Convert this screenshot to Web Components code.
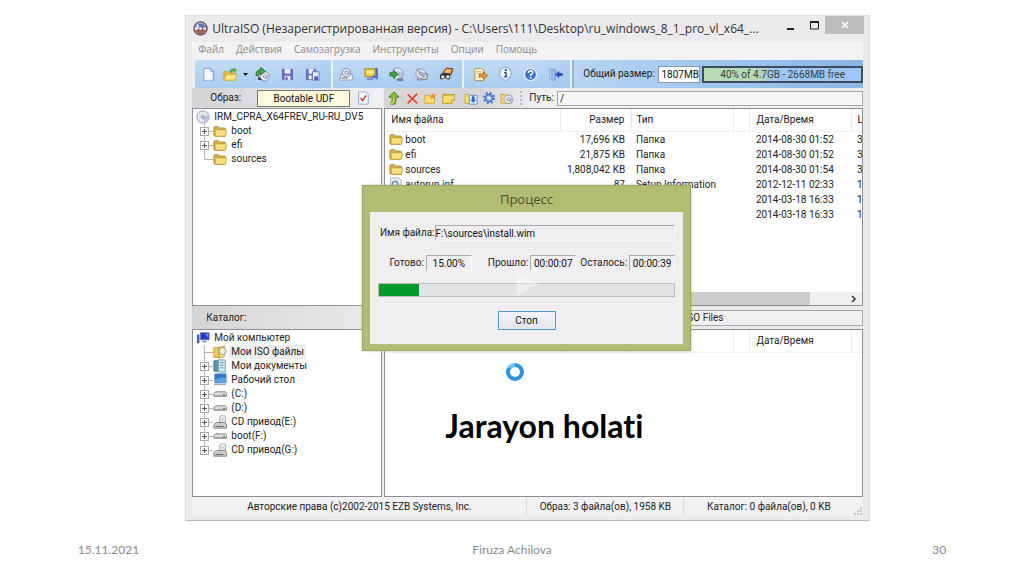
<!DOCTYPE html>
<html lang="uz">
<head>
<meta charset="utf-8">
<title>Jarayon holati</title>
<style>
body{margin:0;background:#fff;font-family:Roboto,"Liberation Sans",sans-serif;font-size:10px;line-height:14px;color:#222}
</style>
</head>
<body>
<slide-page>
  <iso-window></iso-window>
  <slide-footer slot="footer"><span>15.11.2021</span><span>Firuza Achilova</span><span>30</span></slide-footer>
</slide-page>
<script>
const svg = (w, h, body) => `<svg width="${w}" height="${h}" viewBox="0 0 16 16" aria-hidden="true">${body}</svg>`;
const cd = (x, y, r) => `<circle cx="${x}" cy="${y}" r="${r}" fill="#e4e6f2" stroke="#8a8fa8"/><path d="M${x} ${y}L${x + r - 1} ${y - 2}A${r} ${r} 0 0 1 ${x + 2} ${y + r - 1}Z" fill="#b9bfe0"/><circle cx="${x}" cy="${y}" r="1.6" fill="#fff" stroke="#777d96"/>`;
const folder = '<path d="M1 4.5Q1 3 2.5 3H6l1.500 1.600H13q1.300 0 1.300 1.300V13q0 1-1 1H2.500Q1 14 1 12.500Z" fill="#d9b343" stroke="#a88a35"/><path d="M3 6.500h11.500q1 0 .8 1L14.400 13q-.2 1-1.200 1H3.400q-1 0-1-1V7.500Z" fill="#f7e07e" stroke="#c09c3c"/>';
const gold = '<path d="M1 4h5l1.500 2H13v8H1z" fill="#f8dc74" stroke="#cfa63c"/>';
const drive = '<path d="M1 7.500L3 5.500H14L15.500 7.500V10.500H1Z" fill="#dcdcdc" stroke="#7c7c7c"/><path d="M1.500 9.500H15V11H1.500Z" fill="#9b9b9b"/><rect x="11.500" y="8" width="2" height="1.500" fill="#5d7a5d"/>';
const ICONS = {
  disc: cd(8, 8, 7),
  logo: '<circle cx="8" cy="8" r="7" fill="#d8d4ea" stroke="#5b4a63" stroke-width="1.400"/><path d="M2 6Q8-1 14 6L8 8Z" fill="#5a76c4"/><path d="M2 10L8 8L14 10Q11 14.500 8 14.500T2 10Z" fill="#a45f4c"/><path d="M5 3L8 8L3 9Z" fill="#efefff"/><circle cx="8" cy="8" r="2" fill="#fff" stroke="#62546e"/>',
  fresh: '<path d="M3 1.500H10.500L13.500 4.500V14.500H3Z" fill="#fbfcff" stroke="#7492cd"/><path d="M10.500 1.500V4.500H13.500" fill="#c7d8f8" stroke="#7492cd"/><path d="M12.500 6v8H5" fill="none" stroke="#b8cbf2"/>',
  open: '<path d="M1 5h5l1 1.500h6V14H1z" fill="#e7bf3f" stroke="#c9a23c"/><path d="M3.500 8H15L12.500 14H1.200Z" fill="#fbe782" stroke="#d5b146"/><path d="M7 5Q8 .5 12 2V.5L15 3.500L12 6V4.500Q10 4 9.500 6Z" fill="#54a845"/>',
  cdup: cd(10.500, 10, 5) + '<path d="M1 9Q1 3 6 3V.5L11 4.500L6 8.500V6Q3.500 6 3.500 9.500Z" fill="#47a647" stroke="#22702e"/><path d="M4 10l4 4-5-.5z" fill="#333"/>',
  save: '<path d="M2 2H14V14H2Z" fill="#6a6fc4"/><path d="M5 2H11V7H5Z" fill="#eef0ff"/><path d="M5 9.500H11V14H5Z" fill="#e2e5fa"/><path d="M6 10.500H8V14H6Z" fill="#5358a8"/>',
  saveas: '<path d="M1 2H12V14H1Z" fill="#6a6fc4"/><path d="M4 2H9V7H4Z" fill="#eef0ff"/><path d="M8 5H15V14H8Z" fill="#e1e6fb" stroke="#7075bd"/><path d="M10 10H14V14H10Z" fill="#5358b8"/><path d="M4 9H7V13H4Z" fill="#fff"/>',
  burn: '<path d="M2 8H14L15 14H1Z" fill="#e9e9ef" stroke="#9d9dad"/>' + cd(8, 6, 4.5) + '<rect x="3" y="11" width="6" height="1.500" fill="#8c92a6"/>',
  zip: '<rect x="1" y="2" width="11" height="8" fill="#f4ce3c" stroke="#a87e1b"/><rect x="3" y="4" width="7" height="3" fill="#fff0a0"/><path d="M13.500 1V13" stroke="#4a70bf" stroke-width="2.500" fill="none"/><path d="M3 11H10V14H3Z" fill="#7d93c4"/><path d="M8 11L11 8L13 12Z" fill="#4a70bf"/>',
  mount: cd(9, 7, 6) + '<path d="M1 6H5V3.500L9.500 8L5 12V9.500H1Z" fill="#45a846" stroke="#1d7330"/><path d="M9 12h6v3H9z" fill="#777f9b"/>',
  compress: '<path d="M4 14L14 13V7H5Z" fill="#d5d9e5" stroke="#6e7487"/>' + cd(7, 7, 5) + '<path d="M7 7L3 2M7 7L11 11" stroke="#6e7487"/>',
  write: '<path d="M4 6L8 1L15 2L13 8Z" fill="#d98443" stroke="#743a18"/><path d="M8 2.500L13 3L11 6L6 6Z" fill="#f6c57c"/><path d="M1 8Q6 5 12 8V12Q10 15 6.500 11.500Q3 15 1 12Z" fill="#3b3940"/><circle cx="4" cy="10.500" r="1.700" fill="#fff"/><circle cx="9.500" cy="10.500" r="1.700" fill="#e9e5e2"/>',
  extract: '<path d="M2 1.500H9L12 4.500V14.500H2Z" fill="#fff1c5" stroke="#b79548"/><path d="M4 5H9M4 7H8M4 11H8" stroke="#cdb270"/><path d="M7 7.500H11V5L15.500 9L11 13V10.500H7Z" fill="#eb9d3a" stroke="#ad651b"/>',
  info: '<path d="M8 .5A6.300 6.300 0 0 1 10 12.700L8 15.500L6 12.700A6.300 6.300 0 0 1 8 .5Z" fill="#eef5ff" stroke="#7aa0d2"/><path d="M6.500 6H8.500V10.500M6.500 10.500H10" fill="none" stroke="#234a8f" stroke-width="1.500"/><circle cx="8.300" cy="3.400" r="1.200" fill="#234a8f"/>',
  help: '<circle cx="8" cy="8" r="6.500" fill="#3a70cf" stroke="#e8f1ff" stroke-width="1.500"/><path d="M5.800 6.500Q6 4 8.200 4Q10.500 4.200 10.300 6.200Q10 7.400 8.200 8.200V9.500" fill="none" stroke="#fff" stroke-width="1.600"/><circle cx="8.200" cy="11.500" r="1" fill="#fff"/>',
  exit: '<path d="M2 2.500H8V13.500H2Z" fill="#dcebff" stroke="#7fa2da"/><path d="M4 2.500L7 4V15L4 13.500Z" fill="#9fc0ef" stroke="#7fa2da"/><path d="M15.500 6.500H12V4L7.500 8L12 12V9.500H15.500Z" fill="#2454c0"/>',
  check: '<path d="M3 1H11L14 4V15H3Z" fill="#f4f7ff" stroke="#86a3d6"/><path d="M5.500 8L7.500 11L11.500 5" fill="none" stroke="#cf3c30" stroke-width="1.800"/>',
  up: '<path d="M4 15H9Q11 11 10 7H13.500L8 1L2 7H5.500Q7 11 4 15Z" fill="#7fc13d" stroke="#3e7a1e"/><path d="M4 15Q9 13 7.500 7" fill="none" stroke="#e8d254" stroke-width="1.500"/>',
  del: '<path d="M2 3L14 14M14 2L2 14" stroke="#e04b30" stroke-width="2.200"/>',
  newfolder: gold + '<path d="M11 1L12 3.500L15 4L13 6L13.500 9L11 7.500L8.500 9L9 6L7 4L10 3.500Z" fill="#f7853a"/>',
  props: '<path d="M1 3H15V10L12 14H1Z" fill="#f9df70" stroke="#b98a1c"/><path d="M15 10H12V14" fill="#fff3b8" stroke="#b98a1c"/><path d="M1 4H15" stroke="#c9a031"/>',
  folderin: gold + '<path d="M6 5H15V15H6Z" fill="#e3efff" stroke="#5b89cd"/><path d="M9 6H12V10H14L10.500 13.500L7 10H9Z" fill="#2c68c9"/>',
  gear: '<circle cx="8" cy="8" r="5.500" fill="none" stroke="#4a7dd0" stroke-width="3" stroke-dasharray="2.200 2.120"/><circle cx="8" cy="8" r="4" fill="#9cc0f5" stroke="#3c6fc6" stroke-width="1.500"/><circle cx="8" cy="8" r="1.500" fill="#e8f0fc"/>',
  foldercd: gold + cd(9.5, 9.5, 5),
  folder, drive,
  file: '<path d="M2 1H11L14 4V15H2Z" fill="#f1f6fb" stroke="#9aabba"/><circle cx="7" cy="8" r="3" fill="none" stroke="#7697b5" stroke-width="1.800"/><circle cx="10" cy="11.500" r="2" fill="none" stroke="#8ba88c"/>',
  computer: '<path d="M5 2H15V10H5Z" fill="#1f38c6" stroke="#6e79a8"/><path d="M10 3h4v5z" fill="#6d8cf0"/><path d="M7 11H12V13H7Z" fill="#8d93a8"/><path d="M1 4H4V14H1Z" fill="#5262a5"/>',
  isofiles: '<path d="M1 3H7V14H1Z" fill="#f3cc58" stroke="#bb9633"/><path d="M7 3L13 1V13L7 15Z" fill="#fbe795" stroke="#bb9633"/><circle cx="11" cy="7" r="4" fill="#f0f2f2b0" stroke="#929baa"/>',
  docs: '<path d="M1 2H6V14H1Z" fill="#559aa8" stroke="#437884"/><path d="M6 1H14V15H6Z" fill="#cfe5ef" stroke="#679cab"/><path d="M8 4H12M8 7H12M8 10H12" stroke="#5598b7"/>',
  desktop: '<path d="M2 1H15V11H2Z" fill="#2e73c6" stroke="#678fbf"/><path d="M2 8Q8 3 15 6V11H2Z" fill="#5aa2dc"/><path d="M1 12H15V14H1Z" fill="#a6afbd"/>',
  cddrive: '<ellipse cx="11" cy="5" rx="3.500" ry="5" fill="#ececec" stroke="#9a9a9a"/><circle cx="11" cy="5" r="1" fill="#aaa"/><path d="M1 11L4 8.500H14L15.500 11V15H1Z" fill="#cfcfcf" stroke="#777"/><path d="M3 13H12" stroke="#555"/>'
};
function define(name, css, html) {
  const t = document.createElement('template');
  t.innerHTML = `<style>*{box-sizing:border-box}${css}</style>${html}`;
  customElements.define(name, class extends HTMLElement {
    constructor() { super(); this.attachShadow({mode: 'open'}).append(t.content.cloneNode(true)); }
  });
}

/* <ui-icon name size> */
customElements.define('ui-icon', class extends HTMLElement {
  connectedCallback() {
    if (this.shadowRoot) return;
    const s = this.getAttribute('size') || 14;
    this.attachShadow({mode: 'open'}).innerHTML = `<style>:host{display:block;flex:none}svg{display:block}</style>${svg(s, s, ICONS[this.getAttribute('name')])}`;
  }
});

/* <tool-button icon size> */
customElements.define('tool-button', class extends HTMLElement {
  connectedCallback() {
    if (this.shadowRoot) return;
    this.attachShadow({mode: 'open'}).innerHTML = `<style>:host{display:block;flex:none;width:var(--tool,25px)}
button{display:flex;width:100%;justify-content:center;align-items:center;border:0;padding:0;background:none}</style>
<button type="button" aria-label="${this.getAttribute('icon')}"><ui-icon name="${this.getAttribute('icon')}" size="${this.getAttribute('size') || 15}"></ui-icon></button>`;
  }
});

/* one row of a directory tree; attributes: root, box, last */
customElements.define('tree-row', class extends HTMLElement {
  connectedCallback() {
    if (this.shadowRoot) return;
    const root = this.hasAttribute('root'), last = this.hasAttribute('last');
    const gutter = root ? '' : `<svg class="g" width="20" height="14" aria-hidden="true"><path d="M11.500 0V${last ? 7 : 14}M11.500 7.500H20" stroke="#b4b4b4" fill="none"/>${this.hasAttribute('box') ? '<rect x="7.500" y="3.500" width="8" height="8" fill="#fff" stroke="#aaa"/><path d="M9 7.500H14M11.500 5V10" stroke="#555"/>' : ''}</svg>`;
    this.attachShadow({mode: 'open'}).innerHTML = `<style>:host{display:flex;align-items:center;height:14px;white-space:nowrap}
:host([root]){padding-left:3px}.g{flex:none}ui-icon{margin-right:2px}span{padding:0 2px}:host([selected]) span{background:#ededed}</style>${gutter}<ui-icon name="${this.getAttribute('icon')}"></ui-icon><span><slot></slot></span>`;
  }
});

/* <file-table> with rows passed as JSON */
customElements.define('file-table', class extends HTMLElement {
  connectedCallback() {
    if (this.shadowRoot) return;
    const rows = JSON.parse(this.getAttribute('rows') || '[]');
    const bare = this.hasAttribute('bare');
    this.attachShadow({mode: 'open'}).innerHTML = `<style>*{box-sizing:border-box}
:host{display:block;overflow:hidden;min-height:0}
table{table-layout:fixed;border-collapse:collapse;width:calc(100% + 12px)}
th,td{padding:0 0 0 6px;text-align:left;font-weight:400;white-space:nowrap;height:15px;line-height:15px;overflow:hidden}
th{height:22px;border-right:1px solid #e8e8ec;border-bottom:1px solid #f0f0f2;background:#fdfdfe}
td:last-child,th:last-child{padding-left:5px}
th.size,td.size{text-align:right;padding-right:7px}
.size+*{padding-left:4px}
td.type{overflow:visible}
.name div{display:flex;align-items:center;gap:2px}
td.name{padding-left:4px}
</style><table><colgroup><col><col style="width:71px"><col style="width:102px"><col style="width:16px"><col style="width:102px"><col style="width:22px"></colgroup>
<thead><tr>${bare ? '<th></th><th></th><th></th><th></th><th>Дата/Время</th><th></th>' : '<th>Имя файла</th><th class="size">Размер</th><th>Тип</th><th></th><th>Дата/Время</th><th>L</th>'}</tr></thead>
<tbody>${rows.map(r => `<tr><td class="name">${r[0] ? `<div><ui-icon name="${r[0]}"></ui-icon>${r[1]}</div>` : ''}</td><td class="size">${r[2]}</td><td class="type">${r[3]}</td><td></td><td>${r[4]}</td><td>${r[5]}</td></tr>`).join('')}</tbody></table>`;
  }
});

define('title-bar', `
:host{display:flex;align-items:flex-start;height:26px;padding-right:5px}
ui-icon{margin:5px 4px 0 7px}
h1{flex:1;min-width:0;margin:0;font:400 12px/26px "Open Sans","Noto Sans",sans-serif;color:#333;white-space:nowrap}
button{display:grid;place-items:center;flex:none;width:24px;height:18px;border:0;padding:0;background:none}
.close{width:39px;background:#bdbdbf}`,
`<ui-icon name="logo" size="15"></ui-icon><h1><slot></slot></h1>
<button type="button" aria-label="Minimize"><svg width="12" height="12"><path d="M4 9h7v2H4z" fill="#222"/></svg></button>
<button type="button" aria-label="Maximize"><svg width="12" height="12"><path d="M3.500 3h8v7h-8z" fill="none" stroke="#222"/><path d="M3 2h9v2H3z" fill="#222"/></svg></button>
<button type="button" class="close" aria-label="Close"><svg width="10" height="10"><path d="M2 2l6 6M8 2l-6 6" stroke="#fff" stroke-width="1.600"/></svg></button>`);

define('menu-bar', `
:host{display:flex;gap:12px;height:18px;align-items:flex-start;padding:0 6px;background:#f3f2f5}
button{border:0;padding:0;background:none;font:10px/15px "Open Sans","Noto Sans",sans-serif;color:#8b8b8b}`,
['Файл', 'Действия', 'Самозагрузка', 'Инструменты', 'Опции', 'Помощь'].map(t => `<button type="button">${t}</button>`).join(''));

define('main-toolbar', `
:host{display:flex;height:28px;background:#f0f0f4;gap:2px;padding-left:3px}
.g{display:flex;align-items:center;background:linear-gradient(90deg,#0000 60%,#9cc3ec66),linear-gradient(#c3dcf6,#a9cdf0)}
.a{padding:0 6px 0 1px}.b{padding:0 3px 0 1px}.c{padding:0 2px 0 4px}
.open{--tool:19px}.drop{display:grid;place-items:center;width:10px;height:20px;border:0;padding:0;background:none}
.s{flex:1;min-width:0;padding-left:9px;border-left:2px dotted #98b4d6}
.s{background:linear-gradient(90deg,#b8d5f3,#96bfea 70%,#8ab6e6)}
label{white-space:nowrap;margin-right:3px}
input{width:42px;height:17px;border:1px solid #8899ae;padding:0;font:inherit;text-align:right;background:#fff;color:#111;margin-right:2px;border-radius:0}
.bar{flex:1;min-width:0;height:17px;border:2px solid #3c4b60;background:linear-gradient(90deg,#b7d9b4 34%,#9dc6f4 44%);text-align:center;line-height:13px;color:#384038;white-space:nowrap}`,
`<div class="g a"><tool-button icon="fresh"></tool-button><tool-button class="open" icon="open"></tool-button><button type="button" class="drop" aria-label="Recent"><svg width="5" height="3"><path d="M0 0h5L2.500 3z" fill="#111"/></svg></button><tool-button icon="cdup"></tool-button><tool-button icon="save"></tool-button><tool-button icon="saveas"></tool-button></div>
<div class="g b"><tool-button icon="burn"></tool-button><tool-button icon="zip"></tool-button><tool-button icon="mount"></tool-button><tool-button icon="compress"></tool-button><tool-button icon="write"></tool-button></div>
<div class="g c"><tool-button icon="extract"></tool-button><tool-button icon="info"></tool-button><tool-button icon="help"></tool-button><tool-button icon="exit"></tool-button></div>
<div class="g s"><label for="t">Общий размер:</label><input id="t" value="1807MB" readonly><div class="bar">40% of 4.7GB - 2668MB free</div></div>`);

define('image-bar', `
:host{display:flex;align-items:center;height:20px;background:linear-gradient(90deg,#d4d4d6,#f0f0f2);padding:0 6px 0 18px}
label{flex:1}
input{width:93px;height:17px;border:1px solid #777;background:#fdfbdc;text-align:center;font:inherit;color:#111;padding:0;border-radius:0}
tool-button{width:26px}`,
`<label for="i">Образ:</label><input id="i" value="Bootable UDF" readonly><tool-button icon="check" size="14"></tool-button>`);

define('path-bar', `
:host{display:flex;align-items:center;height:20px;background:linear-gradient(90deg,#d6d6d8 20%,#efeff2 32%);--tool:18px;padding-left:1px}
i{width:6px;height:14px;margin:0 3px 0 4px;border-left:2px dotted #bbb}
.gap{width:5px}
label{margin-right:3px}
input{flex:1;min-width:0;height:15px;border:1px solid #a5a5aa;background:#f6f6f8;font:inherit;color:#111;padding:0 2px;border-radius:0}`,
`<tool-button icon="up" size="14"></tool-button><tool-button icon="del" size="13"></tool-button><tool-button icon="newfolder" size="13"></tool-button><tool-button icon="props" size="13"></tool-button><span class="gap"></span><tool-button icon="folderin" size="14"></tool-button><tool-button icon="gear" size="14"></tool-button><tool-button icon="foldercd" size="14"></tool-button><i></i><label for="p">Путь:</label><input id="p" value="/" readonly>`);

define('scroll-strip', `
:host{display:flex;height:13px;background:#f0f0f2;justify-content:space-between}
.thumb{width:89%;background:#cdcdcf}
button{width:17px;border:0;padding:0;background:none;display:grid;place-items:center}`,
`<div class="thumb"></div><button type="button" aria-label="Scroll right"><svg width="7" height="8"><path d="M2 1l3 3-3 3" fill="none" stroke="#444" stroke-width="1.700"/></svg></button>`);

define('status-bar', `
:host{display:grid;grid-template-columns:335fr 157fr 179fr;height:19px;align-items:stretch;background:#f2f1f3}
div{display:flex;align-items:center;justify-content:center;border-right:1px solid #ddd;white-space:nowrap}
.l{border-right:0}.l span{flex:1;text-align:center}svg{align-self:flex-end}`,
`<div><span>Авторские права (c)2002-2015 EZB Systems, Inc.</span></div><div>Образ: 3 файла(ов), 1958 KB</div><div class="l"><span>Каталог: 0 файла(ов), 0 KB</span><svg width="10" height="10"><path d="M7 1h2v2H7zM7 4h2v2H7zM4 4h2v2H4zM7 7h2v2H7zM4 7h2v2H4zM1 7h2v2H1z" fill="#c4c4c8"/></svg></div>`);

define('process-dialog', `
:host{display:block;background:#b2bd72;border:1px solid #9da95f;padding:0 7px 6px;box-shadow:0 0 2px #7778}
h2{margin:0;font:400 13px/26px "Open Sans","Noto Sans",sans-serif;color:#4b4f35;text-align:center}
.body{position:relative;background:#f0eef1;padding:13px 8px 14px;display:flex;flex-direction:column}
.row{display:flex;align-items:center}
.f{border:1px solid;border-color:#aaa #fafafa #fafafa #aaa;height:16px;background:#f0eef1;font:inherit;color:#111;padding:0;text-align:center;width:46px;border-radius:0}
.n .f{flex:1;min-width:0;text-align:left}
.n label{padding-left:2px}
.t{margin-top:14px;justify-content:flex-end}
.t label{margin:0 2px 0 0}.t .f+label{margin-left:4px}.t .f+.m{margin-left:16px}
progress{appearance:none;display:block;width:100%;height:14px;margin-top:12px;border:1px solid #bcbcbc}
progress::-webkit-progress-bar{background:#e4e3e5}
progress::-webkit-progress-value{background:#069a2c}
button{align-self:center;width:58px;height:19px;margin-top:14px;border:1px solid #4f9bd0;background:linear-gradient(#f2f4f6,#e3e6ea);font:inherit;color:#111;padding:0}
.play{position:absolute;left:47%;top:63px}`,
`<h2>Процесс</h2><div class="body">
<div class="row n"><label for="n">Имя файла:</label><input class="f" id="n" value="F:\\sources\\install.wim" readonly></div>
<div class="row t"><label for="d">Готово:</label><input class="f" id="d" value="15.00%" readonly><label class="m" for="e">Прошло:</label><input class="f" id="e" value="00:00:07" readonly><label for="r">Осталось:</label><input class="f" id="r" value="00:00:39" readonly></div>
<progress max="100" value="13.5" aria-label="Процесс"></progress>
<button type="button">Стоп</button><svg class="play" width="22" height="20" aria-hidden="true"><path d="M0 0L22 8L0 20Z" fill="#fff" opacity=".4"/></svg></div>`);

define('iso-window', `
:host{display:flex;flex-direction:column;position:relative;background:#eceaed;border:1px solid #dfdfe3;border-bottom-color:#b5bac4}
.in{flex:1;min-height:0;display:flex;flex-direction:column;margin:0 6px 4px}
.grid{flex:1;min-height:0;display:grid;grid-template-columns:190px minmax(0,1fr);grid-template-rows:auto 198fr auto 168fr;column-gap:2px}
.grid>*{min-height:0}
.pane{background:#fff;border:1px solid #8e8e94;overflow:hidden;display:flex;flex-direction:column}
.pane tree-row,.pane scroll-strip{flex:none}.pane file-table{flex:1}
.top{padding-top:1px}
.cat{height:23px;line-height:23px;padding-left:14px;background:linear-gradient(90deg,#d4d4d6,#ececee)}
.dir{margin:4px 0 3px;border:1px solid #a9a9ad;background:#f1f1f3;padding-left:302px;line-height:14px}
process-dialog{position:absolute;left:25.7%;top:169px;width:48.2%}
.spin{position:absolute;left:46.700%;top:346px}
h2{position:absolute;left:259px;top:391px;margin:0;font:700 32px/38px Lato,sans-serif;font-variant-ligatures:none;color:#000;white-space:nowrap}`,
`<title-bar>UltraISO (Незарегистрированная версия) - C:\\Users\\111\\Desktop\\ru_windows_8_1_pro_vl_x64_...</title-bar>
<div class="in"><menu-bar></menu-bar><main-toolbar></main-toolbar>
<div class="grid">
<image-bar></image-bar><path-bar></path-bar>
<div class="pane top"><tree-row root icon="disc">IRM_CPRA_X64FREV_RU-RU_DV5</tree-row><tree-row box icon="folder">boot</tree-row><tree-row box icon="folder">efi</tree-row><tree-row last icon="folder">sources</tree-row></div>
<div class="pane"><file-table rows='[["folder","boot","17,696 KB","Папка","2014-08-30 01:52","3"],["folder","efi","21,875 KB","Папка","2014-08-30 01:52","3"],["folder","sources","1,808,042 KB","Папка","2014-08-30 01:54","3"],["file","autorun.inf","87","Setup Information","2012-12-11 02:33","1"],["","","","","2014-03-18 16:33","1"],["","","","","2014-03-18 16:33","1"]]'></file-table><scroll-strip></scroll-strip></div>
<div class="cat">Каталог:</div><div class="dir">SO Files</div>
<div class="pane top"><tree-row root icon="computer">Мой компьютер</tree-row><tree-row selected icon="isofiles">Мои ISO файлы</tree-row><tree-row box icon="docs">Мои документы</tree-row><tree-row box icon="desktop">Рабочий стол</tree-row><tree-row box icon="drive">(C:)</tree-row><tree-row box icon="drive">(D:)</tree-row><tree-row box icon="cddrive">CD привод(E:)</tree-row><tree-row box icon="drive">boot(F:)</tree-row><tree-row box last icon="cddrive">CD привод(G:)</tree-row></div>
<div class="pane"><file-table bare></file-table></div>
</div><status-bar></status-bar></div>
<process-dialog></process-dialog>
<svg class="spin" width="20" height="20" aria-hidden="true"><circle cx="10" cy="10" r="7" fill="none" stroke="#2c93e0" stroke-width="4"/><path d="M4 6A7 7 0 0 1 10 3" fill="none" stroke="#7cc4f5" stroke-width="3"/></svg>
<h2>Jarayon holati</h2>`);

define('slide-page', `
:host{display:flex;flex-direction:column;min-height:100vh;padding:15px 0 0;box-sizing:border-box}
.stage{flex:1;display:flex;margin:0 15% 0 18.100%}
.stage ::slotted(*){flex:1;min-width:0}`,
`<main class="stage"><slot></slot></main><slot name="footer"></slot>`);

define('slide-footer', `
:host{display:grid;grid-template-columns:1fr auto 1fr;height:53px;align-items:center;padding:2px 7.600% 0;font:12px/16px Lato,sans-serif;color:#8b8b8b}
::slotted(:last-child){text-align:right}`, `<slot></slot>`);
</script>
</body>
</html>
